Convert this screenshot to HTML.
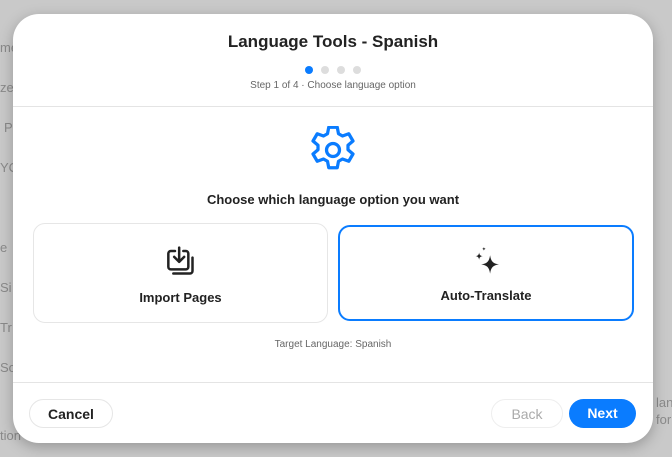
<!DOCTYPE html>
<html><head><style>
body{margin:0;width:672px;height:457px;background:#c9c9c9;font-family:"Liberation Sans",sans-serif;position:relative;overflow:hidden}
.bg{position:absolute;color:#8a8a8a;font-size:13px}
.m{position:absolute;left:13px;top:14px;width:640px;height:429px;background:#fff;border-radius:26px;box-shadow:0 4px 14px rgba(0,0,0,.25)}
.t{position:absolute;top:18px;width:100%;text-align:center;font-size:17px;font-weight:bold;color:#222}
.dots{position:absolute;top:47px;left:292px}
.dots span{display:inline-block;width:8px;height:8px;border-radius:50%;background:#ddd;margin-right:8px}
.s{position:absolute;top:66px;width:100%;text-align:center;font-size:10px;color:#666}
.hr{position:absolute;left:0;width:100%;height:1px;background:#e4e4e4}
.q{position:absolute;top:178px;width:100%;text-align:center;font-size:13px;font-weight:bold;color:#222}
.c{position:absolute;border-radius:12px;box-sizing:border-box;text-align:center;font-size:13px;font-weight:bold;color:#222}
.btn{position:absolute;top:385px;height:29px;border-radius:15px;box-sizing:border-box;font-size:14px;font-weight:bold;text-align:center;line-height:29px}
</style></head><body>
<div class="bg" style="left:0;top:40px">me</div>
<div class="bg" style="left:0;top:80px">ze</div>
<div class="bg" style="left:4px;top:120px">P</div>
<div class="bg" style="left:0;top:160px">YC</div>
<div class="bg" style="left:0;top:240px">e</div>
<div class="bg" style="left:0;top:280px">Si</div>
<div class="bg" style="left:0;top:320px">Tr</div>
<div class="bg" style="left:0;top:360px">So</div>
<div class="bg" style="left:0;top:428px">tion</div>
<div class="bg" style="left:656px;top:395px">lan</div>
<div class="bg" style="left:656px;top:412px">for</div>
<div class="m">
<div class="t">Language Tools - Spanish</div>
<div class="dots"><span style="background:#0a7cff"></span><span></span><span></span><span></span></div>
<div class="s">Step 1 of 4 · Choose language option</div>
<div class="hr" style="top:92px"></div>
<svg style="position:absolute;left:295px;top:112px" width="50" height="48" viewBox="2.4 2.4 19.2 19.2" fill="none" stroke="#0a7cff" stroke-width="1.3" stroke-linejoin="round"><circle cx="12" cy="12" r="2.6"/><path d="M10.3 2.9h3.4l.5 2.6 1.6.9 2.5-.9 1.7 2.9-2 1.7v1.8l2 1.7-1.7 2.9-2.5-.9-1.6.9-.5 2.6h-3.4l-.5-2.6-1.6-.9-2.5.9-1.7-2.9 2-1.7v-1.8l-2-1.7 1.7-2.9 2.5.9 1.6-.9z"/></svg>
<div class="q">Choose which language option you want</div>
<div class="c" style="left:20px;top:209px;width:295px;height:100px;border:1px solid #e6e6e6">
<svg style="position:absolute;left:131px;top:22px" width="30" height="30" viewBox="3.5 2 17 18" fill="none" stroke="#222" stroke-width="1.5" stroke-linecap="round" stroke-linejoin="round"><path d="M9 5H6.5A1.5 1.5 0 0 0 5 6.5v8A1.5 1.5 0 0 0 6.5 16h9a1.5 1.5 0 0 0 1.5-1.5v-8A1.5 1.5 0 0 0 15.5 5H14"/><path d="M11.5 3v8M8.5 8.5l3 3 3-3"/><path d="M8 18.5h10a1.5 1.5 0 0 0 1.5-1.5V9"/></svg>
<div style="position:absolute;top:66px;width:100%">Import Pages</div></div>
<div class="c" style="left:325px;top:211px;width:296px;height:96px;border:2px solid #0a7cff">
<svg style="position:absolute;left:135px;top:19px" width="24" height="28" viewBox="3 0.5 17.5 20" fill="#222"><path d="M14 7c.7 4.5 2 6 6.5 6.7-4.5.7-5.8 2.2-6.5 6.7-.7-4.5-2-6-6.5-6.7 4.5-.7 5.8-2.2 6.5-6.7z"/><path d="M6 5c.3 1.8.8 2.4 2.6 2.7C6.8 8 6.3 8.6 6 10.4 5.7 8.6 5.2 8 3.4 7.7 5.2 7.4 5.7 6.8 6 5z"/><path d="M9.5 1c.15.9.4 1.2 1.3 1.35-.9.15-1.15.45-1.3 1.35-.15-.9-.4-1.2-1.3-1.35.9-.15 1.15-.45 1.3-1.35z"/></svg>
<div style="position:absolute;top:61px;width:100%">Auto-Translate</div></div>
<div class="s" style="top:325px;font-size:10px">Target Language: Spanish</div>
<div class="hr" style="top:368px"></div>
<div class="btn" style="left:16px;width:84px;border:1px solid #e6e6e6;color:#222">Cancel</div>
<div class="btn" style="left:478px;width:72px;border:1px solid #eee;color:#aaa;font-weight:normal">Back</div>
<div class="btn" style="left:556px;width:67px;background:#0a7cff;color:#fff">Next</div>
</div>
</body></html>
